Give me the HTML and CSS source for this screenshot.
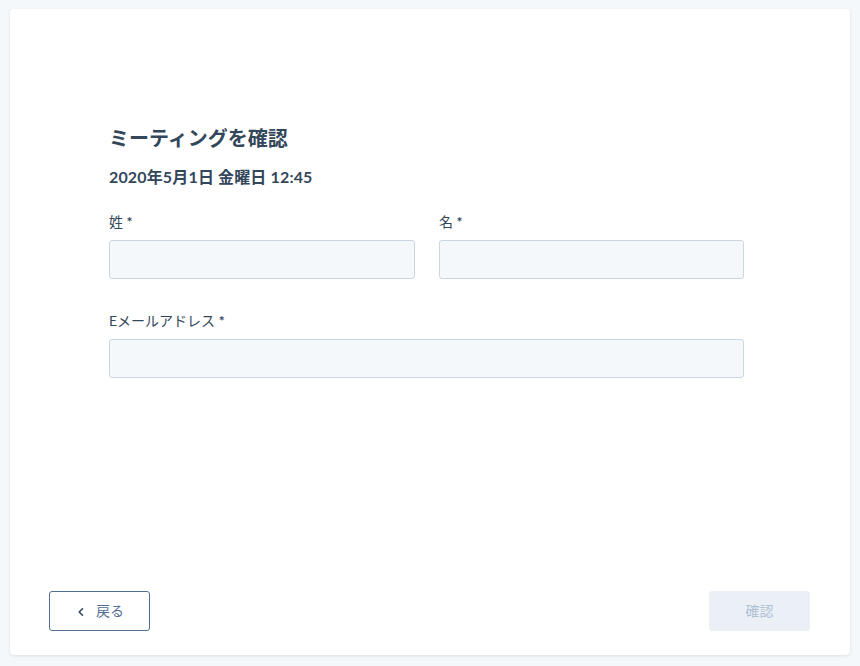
FILE: index.html
```html
<!DOCTYPE html>
<html lang="ja">
<head>
<meta charset="utf-8">
<link rel="stylesheet" href="styles.css">
</head>
<body>
<div class="card">
  <div class="main">
    <h1 class="title">ミーティングを確認</h1>
    <p class="date">2020年5月1日 金曜日 12:45</p>
    <div class="row">
      <div class="field">
        <label class="label">姓 <b>*</b></label>
        <div class="input"></div>
      </div>
      <div class="field">
        <label class="label">名 <b>*</b></label>
        <div class="input"></div>
      </div>
    </div>
    <div class="field email">
      <label class="label">Eメールアドレス <b>*</b></label>
      <div class="input"></div>
    </div>
  </div>
  <div class="footer">
    <button class="btn back">
      <svg class="chev" width="6" height="10" viewBox="0 0 6 10"><path d="M4.5 1.8 L1.2 5 L4.5 8.2" fill="none" stroke="#33475b" stroke-width="1.6" stroke-linecap="round" stroke-linejoin="round"/></svg>
      <span>戻る</span>
    </button>
    <button class="btn confirm">確認</button>
  </div>
</div>
</body>
</html>
```

FILE: styles.css
```css
* { box-sizing: border-box; }
html, body { margin: 0; padding: 0; }
body {
  background: #f5f8fa;
  font-family: "Lato", "Noto Sans CJK JP", sans-serif;
  color: #33475b;
  width: 860px;
  height: 666px;
  overflow: hidden;
}
.card {
  margin: 9px 10px 0 10px;
  width: 840px;
  height: 646px;
  background: #fff;
  border-radius: 4px;
  box-shadow: 0 1px 3px rgba(45, 62, 80, 0.12);
  display: flex;
  flex-direction: column;
  justify-content: space-between;
}
.main {
  padding: 112px 0 0 99px;
  width: 733px;
}
.title {
  margin: 0;
  font-size: 20px;
  font-weight: 700;
  line-height: 34px;
}
.date {
  margin: 8px 0 0 0;
  font-size: 16px;
  font-weight: 700;
  line-height: 28px;
  letter-spacing: 0.15px;
}
.row {
  display: grid;
  grid-template-columns: 306px 305px;
  column-gap: 24px;
  margin-top: 21px;
}
.field { display: flex; flex-direction: column; }
.label {
  font-size: 14px;
  line-height: 20px;
  margin-bottom: 8px;
}
.label b { font-weight: 700; }
.input {
  height: 39px;
  background: #f5f8fa;
  border: 1px solid #cbd6e2;
  border-radius: 3px;
}
.email { margin-top: 32px; width: 635px; }
.footer {
  display: flex;
  justify-content: space-between;
  padding: 0 40px 24px 39px;
}
.btn {
  height: 40px;
  width: 101px;
  border-radius: 3px;
  font-family: "Lato", "Noto Sans CJK JP", sans-serif;
  font-size: 14px;
  line-height: 1;
  display: flex;
  align-items: center;
  justify-content: center;
  cursor: pointer;
  padding: 0;
}
.back {
  background: #fff;
  border: 1px solid #506e91;
  color: #506e91;
  gap: 12px;
  padding-left: 3px;
}
.chev { margin-top: 1px; }
.confirm {
  background: #eaf0f6;
  border: 1px solid #eaf0f6;
  color: #b0c1d4;
}
```
